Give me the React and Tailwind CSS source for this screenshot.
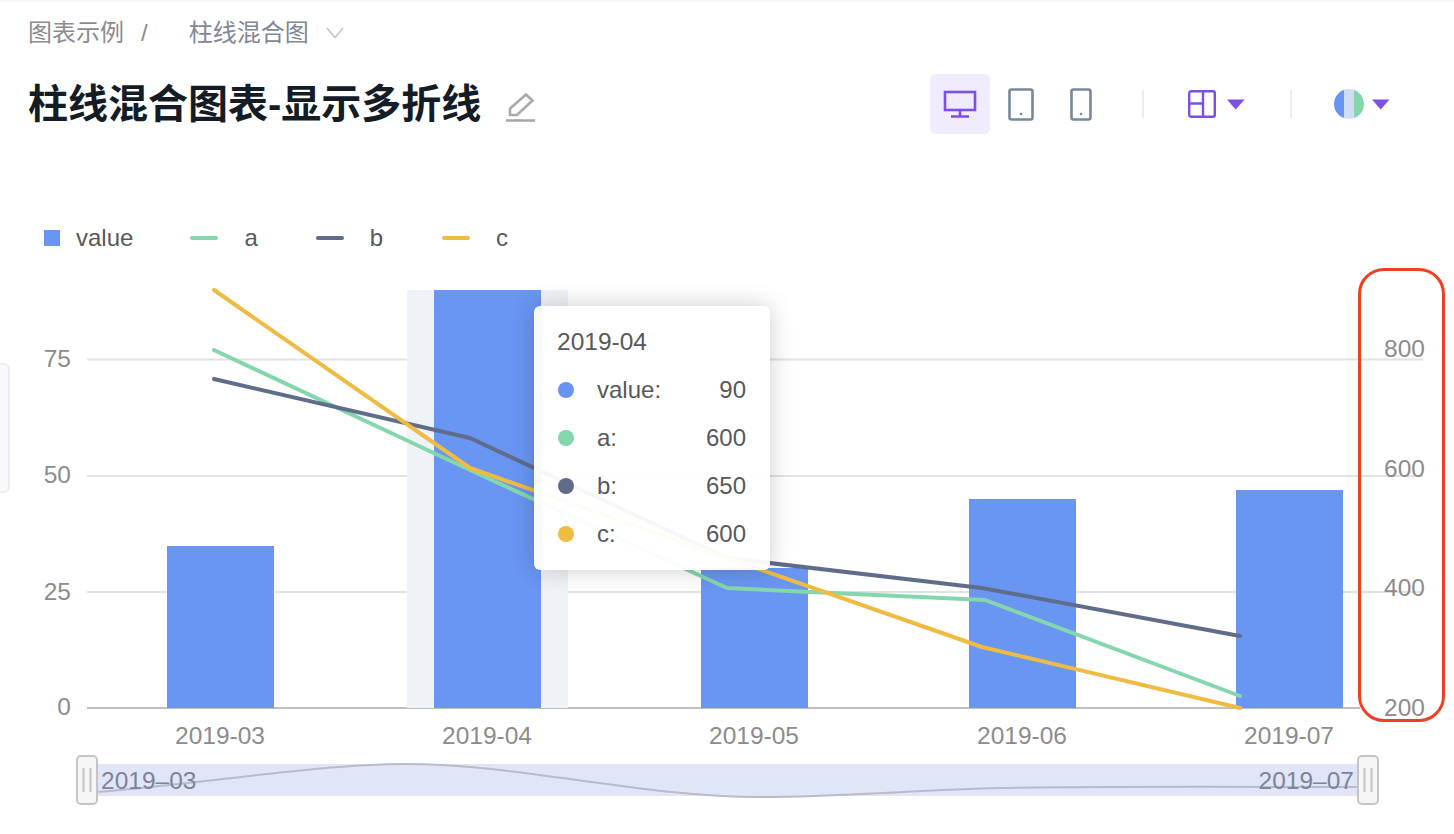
const latin = '"Liberation Sans", "Noto Sans CJK SC", sans-serif'

const bars = [
  { x: 167, top: 546 },
  { x: 434, top: 290 },
  { x: 701, top: 568 },
  { x: 969, top: 499 },
  { x: 1236, top: 490 },
]

const lines = [
  { color: '#84d7ac', points: '214,350 470,470 727,588 985,600 1240,696' },
  { color: '#5f6d8b', points: '214,379 470,438 727,558 982,588 1240,636' },
  { color: '#efbb42', points: '214,290 470,468 727,558 982,647 1240,708' },
]

const tooltipRows = [
  { label: 'value:', value: '90', dot: 'bg-[#6794f2]' },
  { label: 'a:', value: '600', dot: 'bg-[#84d7ac]' },
  { label: 'b:', value: '650', dot: 'bg-[#5f6d8b]' },
  { label: 'c:', value: '600', dot: 'bg-[#efbb42]' },
]

function Caret() {
  return (
    <svg width="18" height="11" viewBox="0 0 18 11">
      <path d="M0 0.5h17.5L8.7 10.5z" fill="#7c4fe8" />
    </svg>
  )
}

function Toolbar() {
  return (
    <div className="flex items-center mr-[64px]">
      <div className="w-[60px] h-[60px] rounded-md bg-[#f0ebfd] flex items-center justify-center">
        <svg width="34" height="28" viewBox="0 0 34 28" fill="none" stroke="#7c4fe8" strokeWidth="2.6">
          <rect x="2" y="2" width="30" height="18" />
          <path d="M17 20v6M8 26.5h18" />
        </svg>
      </div>
      <div className="w-[60px] ml-[1px] flex justify-center">
        <svg width="26" height="33" viewBox="0 0 26 33" fill="none">
          <rect x="1.5" y="1.5" width="23" height="30" rx="2" stroke="#76889a" strokeWidth="2.6" />
          <circle cx="13" cy="26" r="1.3" fill="#76889a" />
        </svg>
      </div>
      <div className="w-[60px] flex justify-center">
        <svg width="22" height="33" viewBox="0 0 22 33" fill="none">
          <rect x="1.5" y="1.5" width="19" height="30" rx="2" stroke="#76889a" strokeWidth="2.6" />
          <circle cx="11" cy="26" r="1.3" fill="#76889a" />
        </svg>
      </div>
      <div className="w-[2px] h-[28px] bg-[#eeeeee] ml-[31px]" />
      <div className="ml-[44px] flex items-center gap-[11px]">
        <svg width="28" height="28" viewBox="0 0 28 28" fill="none" stroke="#7c4fe8" strokeWidth="2.4">
          <rect x="1.2" y="1.2" width="25.6" height="25.6" rx="2" />
          <path d="M15 1v26M1 13.5h14" />
        </svg>
        <Caret />
      </div>
      <div className="w-[2px] h-[28px] bg-[#eeeeee] ml-[45px]" />
      <div className="ml-[42px] flex items-center gap-[8px]">
        <div className="w-[30px] h-[30px] rounded-full overflow-hidden flex">
          <div className="w-[10px] bg-[#6794f2]" />
          <div className="w-[10px] bg-[#cfdcf8]" />
          <div className="w-[10px] bg-[#84d7ac]" />
        </div>
        <Caret />
      </div>
    </div>
  )
}

function LegendLine({ color, label, className }) {
  return (
    <div className={`flex items-center ${className}`}>
      <span className="w-[28px] h-[4px] rounded-full" style={{ backgroundColor: color }} />
      <span className="ml-[26px]">{label}</span>
    </div>
  )
}

function Chart() {
  const axisText = { fontSize: 24.5, fill: '#8c8c8c', fontFamily: latin }
  return (
    <svg className="block" width="1454" height="564" viewBox="0 270 1454 564">
      {[359.5, 476, 592].map((y) => (
        <line key={y} x1="87" x2="1423" y1={y} y2={y} stroke="#e2e2e2" strokeWidth="2" />
      ))}
      <line x1="87" x2="1360" y1="708" y2="708" stroke="#bfbfbf" strokeWidth="2" />

      {[['75', 359], ['50', 475], ['25', 592], ['0', 707]].map(([t, y]) => (
        <text key={t} x="71" y={y + 8} textAnchor="end" {...axisText}>{t}</text>
      ))}
      {[['800', 349], ['600', 469], ['400', 588], ['200', 708]].map(([t, y]) => (
        <text key={t} x="1384" y={y + 8} {...axisText}>{t}</text>
      ))}
      {[['2019-03', 220], ['2019-04', 487], ['2019-05', 754], ['2019-06', 1022], ['2019-07', 1289]].map(([t, x]) => (
        <text key={t} x={x} y="744" textAnchor="middle" {...axisText}>{t}</text>
      ))}

      <rect x="407" y="290" width="161" height="418" fill="#eff3f8" />
      {bars.map((b) => (
        <rect key={b.x} x={b.x} y={b.top} width="107" height={708 - b.top} fill="#6995f3" />
      ))}
      {lines.map((l) => (
        <polyline key={l.color} points={l.points} fill="none" stroke={l.color} strokeWidth="4" strokeLinejoin="round" strokeLinecap="round" />
      ))}

      {/* range slider */}
      <rect x="97" y="764" width="1261" height="32" fill="#e0e5f7" />
      <path d="M97 792C200 784 320 764 405 764C520 764 640 797 760 797C830 797 920 790 1000 788C1120 786 1240 787 1358 787" fill="none" stroke="#b6bccb" strokeWidth="2" />
      <text x="101" y="789" fontSize="24.5" fill="#7f8494" fontFamily={latin}>2019–03</text>
      <text x="1354" y="789" fontSize="24.5" fill="#7f8494" textAnchor="end" fontFamily={latin}>2019–07</text>
      {[77, 1358].map((x) => (
        <g key={x}>
          <rect x={x} y="756" width="20" height="48" rx="4" fill="#f6f6f6" stroke="#c4c4c4" strokeWidth="2" />
          <path d={`M${x + 6.5} 768v24M${x + 13.5} 768v24`} stroke="#c4c4c4" strokeWidth="2" />
        </g>
      ))}
    </svg>
  )
}

export default function App() {
  return (
    <div className="relative w-[1454px] h-[834px] overflow-hidden bg-white border-t-2 border-[#f6f6f6]" style={{ fontFamily: latin }}>
      <div className="absolute left-[-10px] top-[361px] w-[20px] h-[130px] rounded-md bg-[#f8f9fd] border-2 border-[#eeeeee]" />

      <div className="pl-[28px] h-[64px] flex items-center text-[24px] leading-none -mt-[1px]">
        <span className="text-[#8c8c8c]">图表示例</span>
        <span className="text-[#8c8c8c] ml-[17px]">/</span>
        <span className="text-[#7f8896] ml-[41px]">柱线混合图</span>
        <svg className="ml-[17px]" width="18" height="12" viewBox="0 0 18 12" fill="none" stroke="#c4c4c4" strokeWidth="1.6">
          <path d="M1 1l8 9.5L17 1" />
        </svg>
      </div>

      <div className="h-[60px] mt-[9px] pl-[28px] flex items-center justify-between">
        <div className="flex items-center">
          <h1 className="text-[40px] leading-none font-bold text-[#141c26]">柱线混合图表-显示多折线</h1>
          <svg className="ml-[25px] mt-[6px]" width="30" height="30" viewBox="0 0 30 30" fill="none" stroke="#a9a9a9" strokeWidth="2.6">
            <path d="M4 23v-6.5L20 2.5l6.5 6L11 23z" />
            <path d="M0 28.5h29" />
          </svg>
        </div>
        <Toolbar />
      </div>

      <div className="mt-[76px] h-[60px] pl-[44px] pt-[12px] flex items-start text-[24px] leading-[32px] text-[#595959]">
        <div className="flex items-center">
          <span className="w-[16px] h-[16px] bg-[#6995f3]" />
          <span className="ml-[16px]">value</span>
        </div>
        <LegendLine color="#84d7ac" label="a" className="ml-[57px]" />
        <LegendLine color="#5f6d8b" label="b" className="ml-[58px]" />
        <LegendLine color="#efbb42" label="c" className="ml-[59px]" />
      </div>

      <Chart />

      <div className="absolute left-[534px] top-[304px] w-[236px] h-[264px] rounded-md bg-white/95 shadow-[0_0_24px_rgba(0,0,0,0.2)] pl-[24px] pr-[24px] pt-[20px] text-[24px] leading-[32px] text-[#595959]">
        <div className="-ml-[1px] text-[24.5px]">2019-04</div>
        <div className="mt-[16px] flex flex-col gap-[16px]">
          {tooltipRows.map((r) => (
            <div key={r.label} className="flex items-center">
              <span className={`w-[16px] h-[16px] rounded-full ${r.dot}`} />
              <span className="ml-[23px]">{r.label}</span>
              <span className="ml-auto">{r.value}</span>
            </div>
          ))}
        </div>
      </div>

      <div className="absolute left-[1358px] top-[266px] w-[87px] h-[454px] rounded-[26px] border-[3px] border-[#ee4023]" />
    </div>
  )
}
